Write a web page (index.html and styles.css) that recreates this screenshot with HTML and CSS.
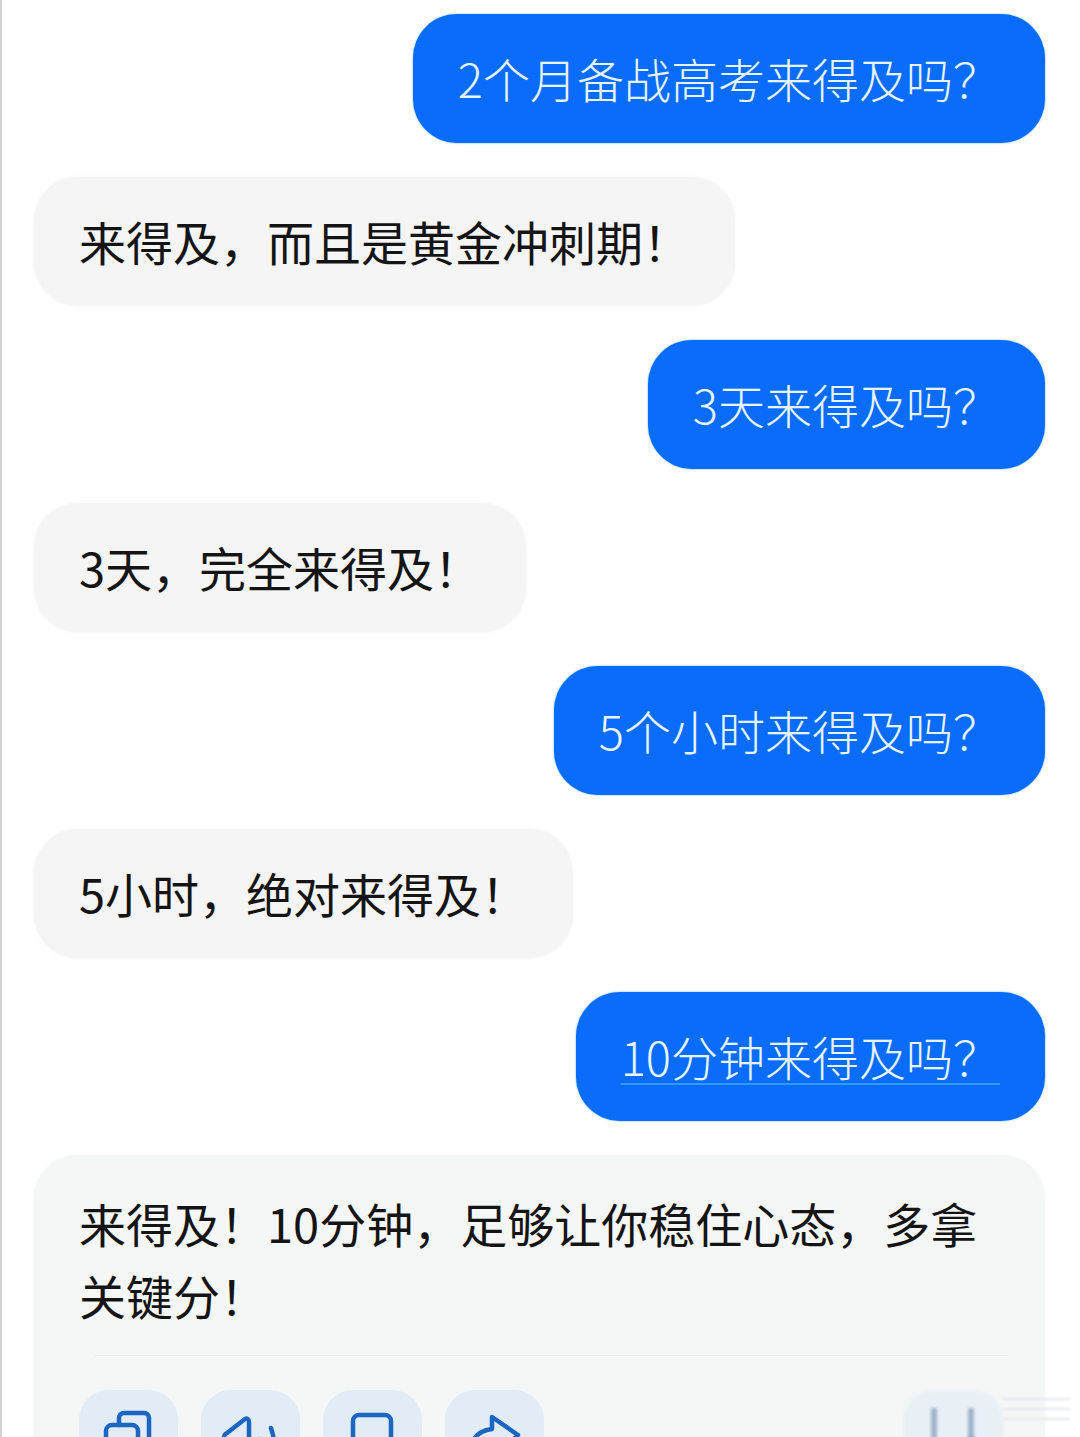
FILE: index.html
```html
<!DOCTYPE html>
<html lang="zh-CN">
<head>
    <meta charset="UTF-8">
    <meta name="viewport" content="width=device-width, initial-scale=1.0">
    <title>来得及吗</title>
    <link rel="stylesheet" href="styles.css">
</head>
<body>
    <div class="chat">
        <div class="bubble user">2个月备战高考来得及吗？</div>
        <div class="bubble bot">来得及，而且是黄金冲刺期！</div>
        <div class="bubble user">3天来得及吗？</div>
        <div class="bubble bot">3天，完全来得及！</div>
        <div class="bubble user">5个小时来得及吗？</div>
        <div class="bubble bot">5小时，绝对来得及！</div>
        <div class="bubble user"><span class="marked">10分钟来得及吗？</span></div>
        <div class="card">
            <div class="card-text">来得及！10分钟，足够让你稳住心态，多拿关键分！</div>
            <div class="divider"></div>
            <div class="actions">
                <div class="action">
                    <svg class="icon" viewBox="0 0 60 60">
                        <path d="M20 15V8a5 5 0 0 1 5-5h20a5 5 0 0 1 5 5v34"/>
                        <rect x="7" y="15" width="32" height="45" rx="6"/>
                    </svg>
                </div>
                <div class="action">
                    <svg class="icon" viewBox="0 0 60 60">
                        <path d="M3 60V27a5 5 0 0 1 3-4L24 9c2-1 4 0 4 3v48"/>
                        <path d="M39 29c2 8 2 18 0 31"/>
                        <path d="M50 18c4 12 5 28 3 42"/>
                    </svg>
                </div>
                <div class="action">
                    <svg class="icon" viewBox="0 0 60 60">
                        <path d="M10 60V11a6 6 0 0 1 6-6h26a6 6 0 0 1 6 6v49"/>
                    </svg>
                </div>
                <div class="action">
                    <svg class="icon" viewBox="0 0 60 60">
                        <path d="M6 34C10 25 18 20 27 19V7L53 25 38 40"/>
                    </svg>
                </div>
                <div class="action feedback">
                    <svg class="arrows" viewBox="0 0 98 60">
                        <path class="faded" d="M30 8V38"/>
                        <path class="faded" d="M67 8V40"/>
                        <path class="tip" d="M30 44l8 8H22z"/>
                        <path class="tip" d="M67 52l8-8H59z"/>
                        <rect class="tip" x="26" y="50" width="8" height="10"/>
                        <rect class="tip" x="63" y="38" width="8" height="8"/>
                    </svg>
                </div>
            </div>
        </div>
    </div>
    <!-- blurred site watermark over the corner -->
    <div class="watermark">
        <span></span>
        <span></span>
        <span></span>
    </div>
</body>
</html>
```

FILE: styles.css
```css
html, body {
    margin: 0;
    height: 1437px;
    overflow: hidden;
    background: #fff;
}
body {
    position: relative;
    border-left: 2px solid #d4d4d4;
    box-sizing: border-box;
    font-family: "Noto Sans CJK SC", "Noto Sans", sans-serif;
    font-size: 47px;
    line-height: 72px;
}
.chat {
    display: flex;
    flex-direction: column;
    gap: 34px;
    padding: 14px 35px 0 32px;
}
.bubble {
    padding: 28px 45px 29px;
    border-radius: 44px;
}
.user {
    align-self: flex-end;
    background: #0a6cfb;
    color: #e6f4ff;
    box-shadow: 0 0 2px #5aa8ff;
    font-weight: 300;
}
.bot {
    align-self: flex-start;
    background: #f5f5f5;
    color: #141414;
    box-shadow: 0 0 4px #f5f5f5;
}
.marked {
    text-decoration: underline;
    text-decoration-color: #2f9bf5;
    text-decoration-thickness: 2px;
    text-underline-offset: 7px;
}
.card {
    padding: 32px 45px 0;
    height: 400px;
    border-radius: 44px 44px 0 0;
    background: #f5f6f6;
    color: #141414;
    box-shadow: 0 0 4px #f5f6f6;
}
.divider {
    height: 1px;
    margin: 24px -8px 0 16px;
    background: #e9e9e9;
}
.actions {
    display: flex;
    gap: 23px;
    margin-top: 34px;
}
.action {
    width: 99px;
    height: 100px;
    border-radius: 30px;
    background: #e1ecf6;
    filter: blur(0.5px);
}
.icon {
    display: block;
    width: 60px;
    height: 60px;
    margin: 20px auto 0;
    fill: none;
    stroke: #1a66c0;
    stroke-width: 4.5;
    stroke-linejoin: round;
    stroke-linecap: round;
}
.feedback {
    margin-left: auto;
    margin-right: -3px;
    background: #e8f0f6;
    filter: blur(1.5px);
}
.arrows {
    display: block;
    width: 98px;
    height: 60px;
    margin-top: 10px;
}
.faded {
    fill: none;
    stroke: #9fb4cc;
    stroke-width: 6;
}
.tip {
    fill: #0f6ddd;
}
.watermark {
    position: absolute;
    left: 1000px;
    top: 1398px;
    display: flex;
    flex-direction: column;
    gap: 8px;
    filter: blur(1px);
}
.watermark span {
    display: block;
    width: 68px;
    height: 2px;
    background: #e4e7ea;
}
```
